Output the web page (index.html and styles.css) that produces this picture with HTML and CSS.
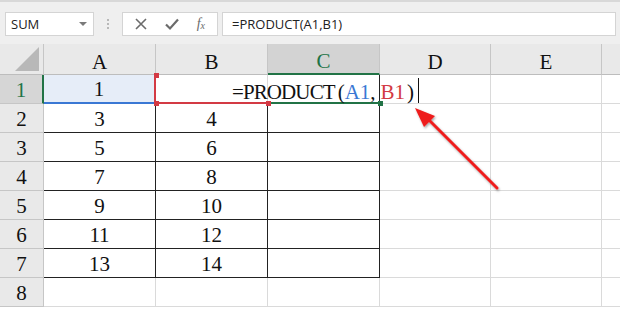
FILE: index.html
```html
<!DOCTYPE html>
<html>
<head>
<meta charset="utf-8">
<link rel="stylesheet" href="styles.css">
</head>
<body>
<div class="app">
  <div class="toolbar">
    <div class="namebox"><span class="name">SUM</span><span class="caret"></span></div>
    <div class="dots"><i></i><i></i><i></i></div>
    <div class="fbtns">
      <svg class="ico" width="14" height="14" viewBox="0 0 14 14"><path d="M2 2 L12 12 M12 2 L2 12" stroke="#6b6b6b" stroke-width="1.6" fill="none"/></svg>
      <svg class="ico" width="16" height="14" viewBox="0 0 16 14"><path d="M2 7.5 L6 11.5 L14 2.5" stroke="#6b6b6b" stroke-width="2.2" fill="none"/></svg>
      <span class="fx">f<sub>x</sub></span>
    </div>
    <div class="finput">=PRODUCT(A1,B1)</div>
  </div>
  <div class="sheet">
    <div class="corner"><span class="tri"></span></div>
    <div class="ch">A</div>
    <div class="ch">B</div>
    <div class="ch sel">C</div>
    <div class="ch">D</div>
    <div class="ch">E</div>
    <div class="ch last"></div>

    <div class="rh sel">1</div>
    <div class="c a1">1</div>
    <div class="c b1"></div>
    <div class="c c1"></div>
    <div class="c"></div>
    <div class="c"></div>
    <div class="c last"></div>

    <div class="rh">2</div>
    <div class="c bd">3</div>
    <div class="c bd">4</div>
    <div class="c bd"></div>
    <div class="c"></div><div class="c"></div><div class="c last"></div>

    <div class="rh">3</div>
    <div class="c bd">5</div>
    <div class="c bd">6</div>
    <div class="c bd"></div>
    <div class="c"></div><div class="c"></div><div class="c last"></div>

    <div class="rh">4</div>
    <div class="c bd">7</div>
    <div class="c bd">8</div>
    <div class="c bd"></div>
    <div class="c"></div><div class="c"></div><div class="c last"></div>

    <div class="rh">5</div>
    <div class="c bd">9</div>
    <div class="c bd">10</div>
    <div class="c bd"></div>
    <div class="c"></div><div class="c"></div><div class="c last"></div>

    <div class="rh">6</div>
    <div class="c bd">11</div>
    <div class="c bd">12</div>
    <div class="c bd"></div>
    <div class="c"></div><div class="c"></div><div class="c last"></div>

    <div class="rh">7</div>
    <div class="c bd">13</div>
    <div class="c bd">14</div>
    <div class="c bd"></div>
    <div class="c"></div><div class="c"></div><div class="c last"></div>

    <div class="rh">8</div>
    <div class="c"></div><div class="c"></div><div class="c"></div>
    <div class="c"></div><div class="c"></div><div class="c last"></div>

    <div class="edit"><span class="fn">=PRODUCT</span><span class="po">(</span><span class="ra">A1</span>,<span class="rb">B1</span><span class="pc">)</span><span class="cursor"></span></div>
    <span class="h h1"></span><span class="h h2"></span><span class="h h3"></span><span class="h h4"></span>
    <svg class="arrow" width="120" height="120" viewBox="0 0 120 120">
      <defs>
        <filter id="sh" x="-20%" y="-20%" width="140%" height="140%">
          <feDropShadow dx="1" dy="1.5" stdDeviation="1.2" flood-color="#000" flood-opacity="0.35"/>
        </filter>
      </defs>
      <g filter="url(#sh)">
        <path d="M93 89 L20 16" stroke="#ee1b1b" stroke-width="3" stroke-linecap="round"/>
        <path d="M11 9 L31 17 L20 28 Z" fill="#ee1b1b"/>
      </g>
    </svg>
  </div>
</div>
</body>
</html>
```

FILE: styles.css
```css
* { box-sizing: border-box; }
html, body { margin: 0; padding: 0; }
body { width: 620px; height: 309px; overflow: hidden; background: #fff; }
.app { width: 620px; height: 309px; display: flex; flex-direction: column; }

.toolbar {
  height: 44px;
  background: #efefef;
  border-top: 2px solid #d8d8d8;
  display: flex;
  align-items: flex-start;
  padding: 10px 4px 0 5px;
  font-family: "Open Sans", "Liberation Sans", sans-serif;
  font-size: 13px;
  color: #222;
}
.namebox {
  width: 89px; height: 24px;
  background: #fff;
  border: 1px solid #d4d4d4;
  display: flex; align-items: center; justify-content: space-between;
  padding: 0 6px 0 5px;
}
.caret { width: 0; height: 0; border-left: 4px solid transparent; border-right: 4px solid transparent; border-top: 4px solid #7a7a7a; }
.dots { width: 28px; height: 24px; display: flex; flex-direction: column; align-items: center; justify-content: center; gap: 2px; }
.dots i { display: block; width: 2px; height: 2px; background: #b8b8b8; }
.fbtns {
  width: 96px; height: 24px; background: #fff; border: 1px solid #d4d4d4;
  display: flex; align-items: center; justify-content: space-between; padding: 0 12px 0 11px;
}
.fx { font-family: "Liberation Serif", serif; font-style: italic; font-size: 14px; color: #6b6b6b; line-height: 1; }
.fx sub { font-size: 10px; vertical-align: -1px; }
.finput {
  flex: 1; height: 24px; margin-left: 4px; background: #fff; border: 1px solid #d4d4d4;
  padding: 2px 0 0 9px; line-height: 18px;
}

.sheet {
  position: relative;
  flex: 1;
  display: grid;
  grid-template-columns: 44px 112px 112px 112px 111px 111px 1fr;
  grid-template-rows: 31px repeat(8, 29px);
  font-family: "Liberation Serif", "Times New Roman", serif;
  font-size: 21px;
  color: #111;
}
.corner { background: #e9e9e9; border-right: 1px solid #c6c6c6; border-bottom: 1px solid #bdbdbd; position: relative; }
.tri { position: absolute; right: 4px; bottom: 3px; width: 0; height: 0; border-left: 24px solid transparent; border-bottom: 24px solid #b8b8b8; }
.ch {
  background: #e9e9e9; border-right: 1px solid #c6c6c6; border-bottom: 1px solid #bdbdbd;
  display: flex; align-items: flex-end; justify-content: center; padding-bottom: 0; line-height: 24px;
}
.ch.sel { background: #d3d3d3; color: #217346; border-bottom: 2px solid #217346; }
.ch.last { border-right: none; }
.rh {
  background: #e9e9e9; border-right: 1px solid #c6c6c6; border-bottom: 1px solid #c6c6c6;
  display: flex; align-items: flex-end; justify-content: center; line-height: 26px;
}
.rh.sel { background: #d6d6d6; color: #217346; border-right: 2px solid #217346; }
.c {
  border-right: 1px solid #dadada; border-bottom: 1px solid #dadada;
  display: flex; align-items: flex-end; justify-content: center; line-height: 26px;
}
.c.last { border-right: none; }
.c.bd { border-right: 1px solid #222; border-bottom: 1px solid #222; }
.a1 { background: #e6edf8; border-bottom: 2px solid #3a78d4; border-right: 2px solid #d33a44; line-height: 25px; }
.b1 { border-bottom: 2px solid #d33a44; border-right: 1px solid #dadada; }
.c1 { border-bottom: 2px solid #217346; border-right: 1px solid #222; }

.edit {
  position: absolute; left: 232px; top: 32px; height: 29px;
  display: flex; align-items: flex-end; line-height: 26px; white-space: nowrap; color: #111;
}
.fn { letter-spacing: -0.9px; }
.po { margin: 0 0 0 3px; }
.ra { color: #3a78d4; }
.rb { color: #d33a44; margin-left: 5px; }
.pc { margin-left: 2px; }
.cursor { display: block; width: 1px; height: 25px; background: #111; margin: 0 0 2px 4px; }

.h { position: absolute; width: 5px; height: 5px; }
.h1 { left: 154px; top: 29px; background: #d33a44; }
.h2 { left: 154px; top: 57px; background: #d33a44; }
.h3 { left: 266px; top: 57px; background: #d33a44; }
.h4 { left: 378px; top: 57px; background: #217346; }

.arrow { position: absolute; left: 404px; top: 55px; }
```
